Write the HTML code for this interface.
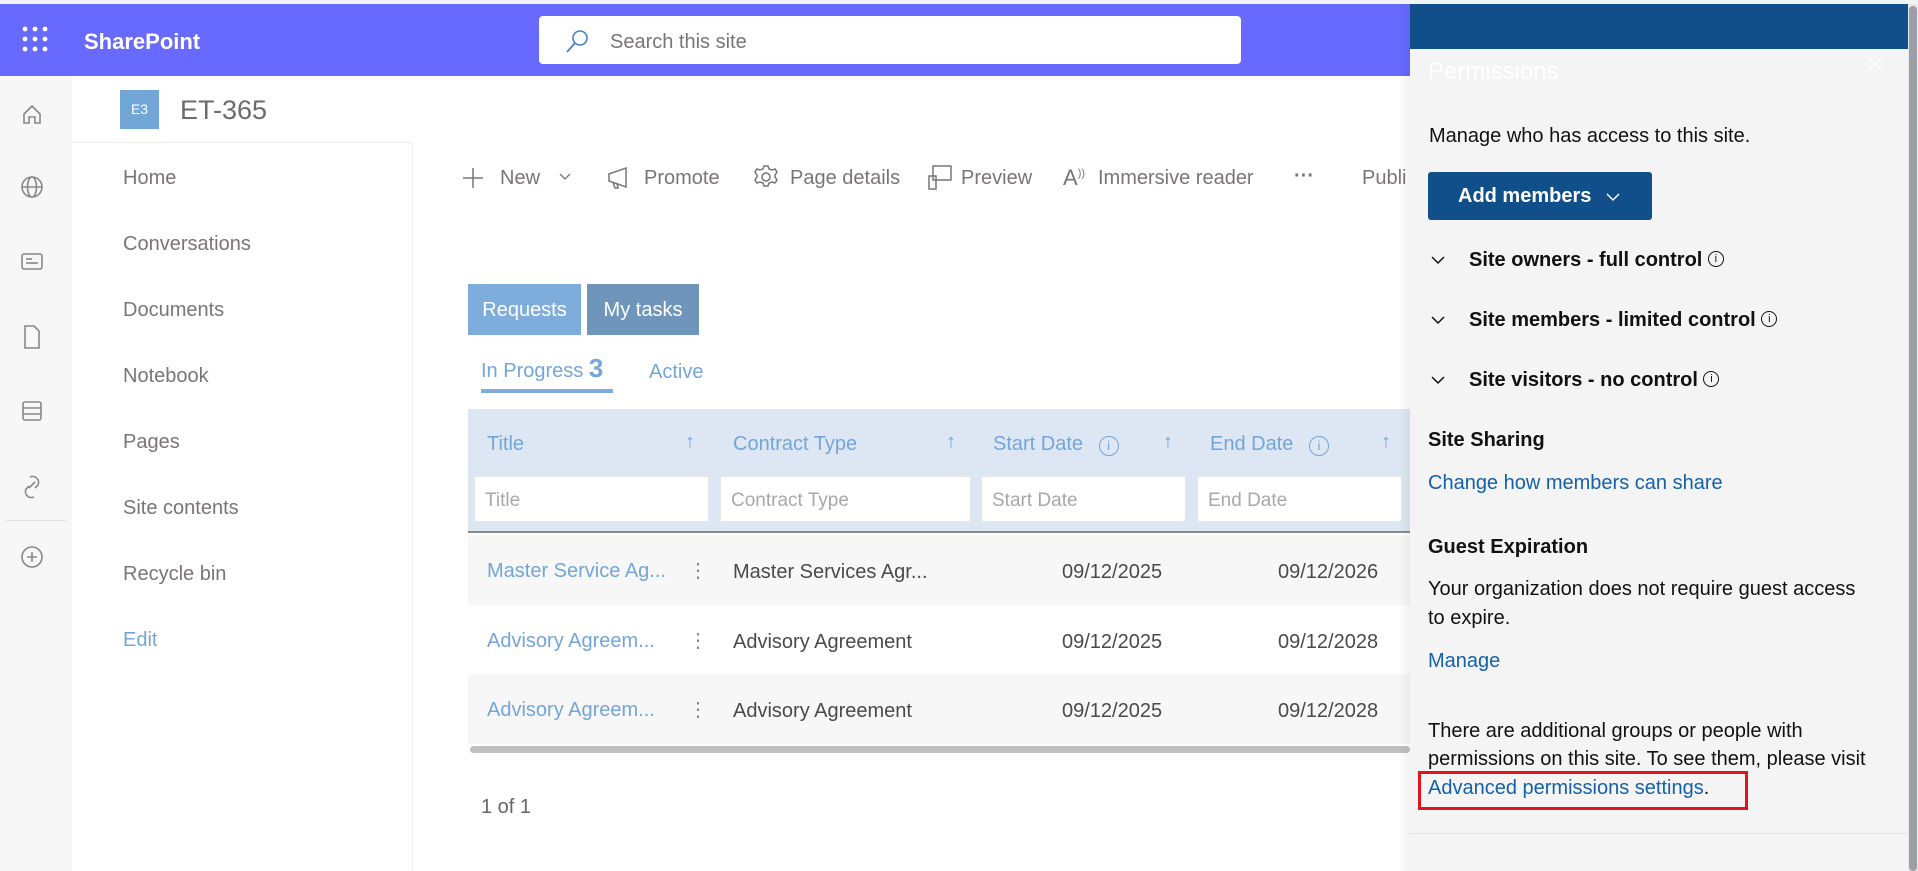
<!DOCTYPE html>
<html><head><meta charset="utf-8"><style>
*{margin:0;padding:0;box-sizing:border-box}
body{width:1918px;height:871px;overflow:hidden;background:#fff;font-family:"Liberation Sans",sans-serif;position:relative;color:#323130}
.a{position:absolute;white-space:nowrap}
.nav{font-size:20px;color:#7a7574}
.cmd{font-size:20px;color:#7a7574}
.th{font-size:20px;color:#74a5d9}
.in{position:absolute;background:#fff;border:1px solid #e6e6e6;height:46px;top:476px;font-size:19px;color:#a8a8a8;padding:13px 10px}
.td{font-size:20px;color:#4a4a4a}
.lk{color:#74a5d9}
.p{font-size:20px;color:#111}
.pl{font-size:20px;color:#1560a8}
.pb{font-size:20px;font-weight:bold;color:#111}
.ic{display:inline-block;width:16px;height:16px;border:1.3px solid #111;border-radius:50%;font-size:11px;font-weight:normal;text-align:center;line-height:14px;vertical-align:4px}
</style></head><body>
<div class="a" style="left:0;top:0;width:1918px;height:4px;background:#f0f4f8"></div>
<div class="a" style="left:0;top:4px;width:1410px;height:72px;background:#6869fe"></div>
<svg class="a" style="left:22px;top:26px" width="26" height="26"><g fill="#fff"><circle cx="3" cy="3" r="2.4"/><circle cx="13" cy="3" r="2.4"/><circle cx="23" cy="3" r="2.4"/><circle cx="3" cy="13" r="2.4"/><circle cx="13" cy="13" r="2.4"/><circle cx="23" cy="13" r="2.4"/><circle cx="3" cy="23" r="2.4"/><circle cx="13" cy="23" r="2.4"/><circle cx="23" cy="23" r="2.4"/></g></svg>
<div class="a" style="left:84px;top:29px;font-size:22px;font-weight:bold;color:#fff">SharePoint</div>
<div class="a" style="left:539px;top:16px;width:702px;height:48px;background:#fff;border-radius:4px"></div>
<svg class="a" style="left:564px;top:28px" width="26" height="26"><circle cx="16" cy="10" r="7" fill="none" stroke="#4a7fd0" stroke-width="1.6"/><line x1="11" y1="15" x2="3" y2="24" stroke="#4a7fd0" stroke-width="1.8"/></svg>
<div class="a" style="left:610px;top:31px;font-size:20px;color:#7a7574">Search this site</div>
<div class="a" style="left:0;top:76px;width:72px;height:795px;background:#f7f7f7"></div>
<svg class="a" style="left:20px;top:98px" width="30" height="480" fill="none" stroke="#8a8886" stroke-width="1.6">
<path d="M4 16 L12 8 L20 16 V25 H15 V19 H9 V25 H4Z"/>
<g transform="translate(0,75)"><circle cx="12" cy="14" r="10"/><ellipse cx="12" cy="14" rx="4.5" ry="10"/><line x1="2" y1="14" x2="22" y2="14"/></g>
<g transform="translate(0,150)"><rect x="2" y="6" width="20" height="15" rx="2"/><line x1="6" y1="11" x2="12" y2="11"/><line x1="6" y1="15" x2="18" y2="15"/></g>
<g transform="translate(0,225)"><path d="M5 3 H14 L19 8 V25 H5Z"/></g>
<g transform="translate(0,300)"><rect x="3" y="4" width="18" height="18" rx="2"/><line x1="3" y1="10" x2="21" y2="10"/><line x1="3" y1="16" x2="21" y2="16"/></g>
<g transform="translate(0,375)"><path d="M10 4 a6 6 0 0 1 8 8 l-3 3 M14 24 a6 6 0 0 1 -8 -8 l3 -3 M9 15 L15 9"/></g>
</svg>
<div class="a" style="left:6px;top:520px;width:60px;height:1px;background:#e1e1e1"></div>
<svg class="a" style="left:20px;top:545px" width="26" height="26" fill="none" stroke="#8a8886" stroke-width="1.6"><circle cx="12" cy="12" r="10"/><path d="M12 7V17M7 12H17"/></svg>
<div class="a" style="left:120px;top:90px;width:39px;height:39px;background:#72a6d6;color:#fff;font-size:14px;text-align:center;line-height:39px">E3</div>
<div class="a" style="left:180px;top:95px;font-size:27px;color:#6b6b6b">ET-365</div>
<div class="a" style="left:72px;top:142px;width:341px;height:729px;border-top:1px solid #ededed;border-right:1px solid #ededed"></div>
<div class="a nav" style="left:123px;top:167px">Home</div>
<div class="a nav" style="left:123px;top:233px">Conversations</div>
<div class="a nav" style="left:123px;top:299px">Documents</div>
<div class="a nav" style="left:123px;top:365px">Notebook</div>
<div class="a nav" style="left:123px;top:431px">Pages</div>
<div class="a nav" style="left:123px;top:497px">Site contents</div>
<div class="a nav" style="left:123px;top:563px">Recycle bin</div>
<div class="a nav" style="left:123px;top:629px;color:#74a5d9">Edit</div>
<svg class="a" style="left:462px;top:166px" width="24" height="24" stroke="#7a7574" stroke-width="1.5"><path d="M11 2V22M1 12H21"/></svg>
<div class="a cmd" style="left:500px;top:167px">New</div>
<svg class="a" style="left:558px;top:172px" width="14" height="10" fill="none" stroke="#7a7574" stroke-width="1.3"><path d="M2 2L7 7L12 2"/></svg>
<svg class="a" style="left:606px;top:165px" width="26" height="26" fill="none" stroke="#7a7574" stroke-width="1.5"><path d="M3 9 L20 3 V22 L3 16Z M7 17 L9 23 H12 L11 18"/></svg>
<div class="a cmd" style="left:644px;top:167px">Promote</div>
<svg class="a" style="left:753px;top:164px" width="26" height="26" fill="none" stroke="#7a7574" stroke-width="1.5"><circle cx="13" cy="13" r="4"/><path d="M11 2h4l1 3 3 1 3-1 2 3-2 3v2l2 3-2 3-3-1-3 1-1 3h-4l-1-3-3-1-3 1-2-3 2-3v-2l-2-3 2-3 3 1 3-1z"/></svg>
<div class="a cmd" style="left:790px;top:167px">Page details</div>
<svg class="a" style="left:927px;top:164px" width="26" height="28" fill="none" stroke="#7a7574" stroke-width="1.5"><rect x="6" y="2" width="18" height="14"/><rect x="2" y="12" width="7" height="13"/></svg>
<div class="a cmd" style="left:961px;top:167px">Preview</div>
<div class="a cmd" style="left:1063px;top:165px;font-size:22px">A<sup style="font-size:11px">))</sup></div>
<div class="a cmd" style="left:1098px;top:167px">Immersive reader</div>
<div class="a cmd" style="left:1294px;top:166px;font-weight:bold;line-height:20px">···</div>
<div class="a cmd" style="left:1362px;top:167px">Publi</div>
<div class="a" style="left:468px;top:284px;width:113px;height:51px;background:#7eaddb;color:#fff;font-size:20px;text-align:center;line-height:53px">Requests</div>
<div class="a" style="left:587px;top:284px;width:112px;height:51px;background:#6f95bb;color:#fff;font-size:20px;text-align:center;line-height:53px">My tasks</div>
<div class="a" style="left:481px;top:356px;font-size:20px;color:#74a5d9;line-height:30px">In Progress <b style="font-size:26px;line-height:20px">3</b></div>
<div class="a" style="left:481px;top:389px;width:132px;height:4px;background:#7eaddb"></div>
<div class="a" style="left:649px;top:361px;font-size:20px;color:#74a5d9">Active</div>
<div class="a" style="left:468px;top:409px;width:942px;height:124px;background:#dce7f3;border-bottom:2px solid #8a8a8a"></div>
<div class="a th" style="left:487px;top:433px">Title</div>
<div class="a th" style="left:685px;top:431px">↑</div>
<div class="a th" style="left:733px;top:433px">Contract Type</div>
<div class="a th" style="left:946px;top:431px">↑</div>
<div class="a th" style="left:993px;top:433px">Start Date <span style="display:inline-block;width:20px;height:20px;border:1.5px solid #74a5d9;border-radius:50%;font-size:13px;text-align:center;line-height:18px;margin-left:10px">i</span></div>
<div class="a th" style="left:1163px;top:431px">↑</div>
<div class="a th" style="left:1210px;top:433px">End Date <span style="display:inline-block;width:20px;height:20px;border:1.5px solid #74a5d9;border-radius:50%;font-size:13px;text-align:center;line-height:18px;margin-left:10px">i</span></div>
<div class="a th" style="left:1381px;top:431px">↑</div>
<div class="in" style="left:474px;width:235px">Title</div>
<div class="in" style="left:720px;width:251px">Contract Type</div>
<div class="in" style="left:981px;width:205px">Start Date</div>
<div class="in" style="left:1197px;width:205px">End Date</div>
<div class="a" style="left:468px;top:535px;width:942px;height:70px;background:#f7f7f7"></div>
<div class="a" style="left:468px;top:674px;width:942px;height:70px;background:#f7f7f7"></div>
<div class="a td lk" style="left:487px;top:560px">Master Service Ag...</div>
<div class="a td lk" style="left:487px;top:630px">Advisory Agreem...</div>
<div class="a td lk" style="left:487px;top:699px">Advisory Agreem...</div>
<div class="a td" style="left:688px;top:558px;color:#888">⋮</div>
<div class="a td" style="left:688px;top:628px;color:#888">⋮</div>
<div class="a td" style="left:688px;top:697px;color:#888">⋮</div>
<div class="a td" style="left:733px;top:561px">Master Services Agr...</div>
<div class="a td" style="left:733px;top:631px">Advisory Agreement</div>
<div class="a td" style="left:733px;top:700px">Advisory Agreement</div>
<div class="a td" style="left:1062px;top:561px">09/12/2025</div>
<div class="a td" style="left:1062px;top:631px">09/12/2025</div>
<div class="a td" style="left:1062px;top:700px">09/12/2025</div>
<div class="a td" style="left:1278px;top:561px">09/12/2026</div>
<div class="a td" style="left:1278px;top:631px">09/12/2028</div>
<div class="a td" style="left:1278px;top:700px">09/12/2028</div>
<div class="a" style="left:470px;top:746px;width:940px;height:7px;background:#c0c0c0;border-radius:4px"></div>
<div class="a td" style="left:481px;top:796px;color:#666">1 of 1</div>
<div class="a" style="left:1398px;top:4px;width:12px;height:867px;background:linear-gradient(to right,rgba(0,0,0,0),rgba(0,0,0,.05))"></div>
<div class="a" style="left:1410px;top:4px;width:498px;height:867px;background:#f4f4f4"></div>
<div class="a" style="left:1410px;top:4px;width:498px;height:45px;background:#114f8a"></div>
<div class="a" style="left:1908px;top:4px;width:10px;height:867px;background:#e8e8e8"></div>
<div class="a" style="left:1909px;top:6px;width:8px;height:865px;background:#9aa0a6;border-radius:4px"></div>
<div class="a" style="left:1428px;top:58px;font-size:24px;color:#fff">Permissions</div>
<svg class="a" style="left:1866px;top:55px" width="18" height="18" stroke="#fff" stroke-width="1.5"><path d="M2 2L16 16M16 2L2 16"/></svg>
<div class="a p" style="left:1429px;top:125px">Manage who has access to this site.</div>
<div class="a" style="left:1428px;top:172px;width:224px;height:48px;background:#114f8a;border-radius:3px;color:#fff;font-size:20px;font-weight:bold;line-height:48px;padding-left:30px">Add members <svg width="16" height="10" style="margin-left:8px" fill="none" stroke="#fff" stroke-width="1.5"><path d="M2 2L8 8L14 2"/></svg></div>
<svg class="a" style="left:1430px;top:255px" width="16" height="150" fill="none" stroke="#111" stroke-width="1.5"><path d="M2 2L8 8L14 2M2 62L8 68L14 62M2 122L8 128L14 122"/></svg>
<div class="a pb" style="left:1469px;top:249px">Site owners - full control <span class="ic">i</span></div>
<div class="a pb" style="left:1469px;top:309px">Site members - limited control <span class="ic">i</span></div>
<div class="a pb" style="left:1469px;top:369px">Site visitors - no control <span class="ic">i</span></div>
<div class="a pb" style="left:1428px;top:429px">Site Sharing</div>
<div class="a pl" style="left:1428px;top:472px">Change how members can share</div>
<div class="a pb" style="left:1428px;top:536px">Guest Expiration</div>
<div class="a p" style="left:1428px;top:578px">Your organization does not require guest access</div>
<div class="a p" style="left:1428px;top:607px">to expire.</div>
<div class="a pl" style="left:1428px;top:650px">Manage</div>
<div class="a p" style="left:1428px;top:720px">There are additional groups or people with</div>
<div class="a p" style="left:1428px;top:748px">permissions on this site. To see them, please visit</div>
<div class="a p" style="left:1428px;top:777px"><span style="color:#1560a8">Advanced permissions settings</span>.</div>
<div class="a" style="left:1418px;top:771px;width:330px;height:39px;border:3px solid #e0141c"></div>
<div class="a" style="left:1410px;top:833px;width:498px;height:1px;background:#e1e1e1"></div>
</body></html>
